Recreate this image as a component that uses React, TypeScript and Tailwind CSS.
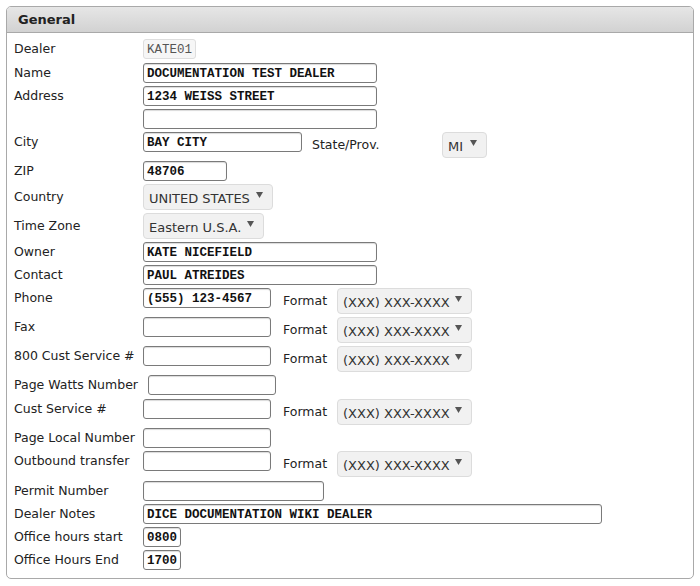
import React from "react";

const labelFont = { fontFamily: '"DejaVu Sans", Verdana, sans-serif' };
const monoFont = { fontFamily: '"Liberation Mono", "Courier New", monospace' };

function Label({ children, tall = false, wide = false }: { children: React.ReactNode; tall?: boolean; wide?: boolean }) {
  return (
    <div
      className={`shrink-0 text-[12.5px] text-[#222] whitespace-nowrap ${wide ? "w-[134px]" : "w-[129px]"} ${tall ? "h-[26px] leading-[26px]" : "h-[20px] leading-[20px]"}`}
      style={labelFont}
    >
      {children}
    </div>
  );
}

function Input({ w, value = "" }: { w: number; value?: string }) {
  return (
    <div
      className="h-[20px] border border-[#7a7a7a] rounded-[3px] bg-white shadow-[inset_0_1px_1px_rgba(0,0,0,0.15)] pl-[3px] pt-[1px] text-[12.5px] font-bold text-[#111] leading-[18px] whitespace-nowrap overflow-hidden"
      style={{ ...monoFont, width: w }}
    >
      {value}
    </div>
  );
}

function Select({ w, value }: { w: number; value: string }) {
  return (
    <div
      className="relative h-[26px] border border-[#dcdcdc] rounded-[4px] bg-[#f1f1f1] pl-[5px] text-[13px] text-[#333] leading-[25px] pt-[1px] whitespace-nowrap"
      style={{ ...labelFont, width: w }}
    >
      {value}
      <svg className="absolute right-[9px] top-[7px]" width="7" height="6" viewBox="0 0 7 6">
        <path d="M0 0 L7 0 L3.5 6 Z" fill="#555" />
      </svg>
    </div>
  );
}

function Format() {
  return (
    <div className="flex items-start">
      <div className="ml-[12px] w-[54px] h-[26px] leading-[26px] text-[12.5px] text-[#222]" style={labelFont}>
        Format
      </div>
      <Select w={135} value="(XXX) XXX-XXXX" />
    </div>
  );
}

export default function App() {
  return (
    <div className="w-[700px] h-[586px] bg-white pt-[6px] pl-[6px]">
      <div className="w-[688px] h-[573px] border border-[#a9a9a9] rounded-[5px] overflow-hidden">
        <div className="h-[26px] bg-gradient-to-b from-[#e6e6e6] to-[#d2d2d2] border-b border-[#a9a9a9] pl-[11px] leading-[25px] text-[13px] font-bold text-[#222]" style={labelFont}>
          General
        </div>
        <div className="pl-[7px] pt-[6px] flex flex-col gap-[3px]">
          <div className="flex items-start">
            <Label>Dealer</Label>
            <div
              className="h-[20px] w-[53px] border border-[#dedede] rounded-[3px] bg-[#f6f6f6] pl-[3px] pt-[1px] text-[12.5px] text-[#555] leading-[18px]"
              style={monoFont}
            >
              KATE01
            </div>
          </div>
          <div className="flex items-start mt-[1px]">
            <Label>Name</Label>
            <Input w={234} value="DOCUMENTATION TEST DEALER" />
          </div>
          <div className="flex items-start">
            <Label>Address</Label>
            <Input w={234} value="1234 WEISS STREET" />
          </div>
          <div className="flex items-start">
            <Label>&nbsp;</Label>
            <Input w={234} />
          </div>
          <div className="flex items-start">
            <Label>City</Label>
            <Input w={159} value="BAY CITY" />
            <div className="ml-[10px] w-[130px] h-[26px] leading-[26px] text-[12.5px] text-[#222]" style={labelFont}>
              State/Prov.
            </div>
            <Select w={45} value="MI" />
          </div>
          <div className="flex items-start">
            <Label>ZIP</Label>
            <Input w={84} value="48706" />
          </div>
          <div className="flex items-start">
            <Label tall>Country</Label>
            <Select w={130} value="UNITED STATES" />
          </div>
          <div className="flex items-start">
            <Label tall>Time Zone</Label>
            <Select w={121} value="Eastern U.S.A." />
          </div>
          <div className="flex items-start">
            <Label>Owner</Label>
            <Input w={234} value="KATE NICEFIELD" />
          </div>
          <div className="flex items-start">
            <Label>Contact</Label>
            <Input w={234} value="PAUL ATREIDES" />
          </div>
          <div className="flex items-start">
            <Label>Phone</Label>
            <Input w={128} value="(555) 123-4567" />
            <Format />
          </div>
          <div className="flex items-start">
            <Label>Fax</Label>
            <Input w={128} />
            <Format />
          </div>
          <div className="flex items-start">
            <Label>800 Cust Service #</Label>
            <Input w={128} />
            <Format />
          </div>
          <div className="flex items-start">
            <Label wide>Page Watts Number</Label>
            <Input w={128} />
          </div>
          <div className="flex items-start mt-[1px]">
            <Label>Cust Service #</Label>
            <Input w={128} />
            <Format />
          </div>
          <div className="flex items-start">
            <Label>Page Local Number</Label>
            <Input w={128} />
          </div>
          <div className="flex items-start">
            <Label>Outbound transfer</Label>
            <Input w={128} />
            <Format />
          </div>
          <div className="flex items-start mt-[1px]">
            <Label>Permit Number</Label>
            <Input w={181} />
          </div>
          <div className="flex items-start">
            <Label>Dealer Notes</Label>
            <Input w={459} value="DICE DOCUMENTATION WIKI DEALER" />
          </div>
          <div className="flex items-start">
            <Label>Office hours start</Label>
            <Input w={38} value="0800" />
          </div>
          <div className="flex items-start">
            <Label>Office Hours End</Label>
            <Input w={38} value="1700" />
          </div>
        </div>
      </div>
    </div>
  );
}
